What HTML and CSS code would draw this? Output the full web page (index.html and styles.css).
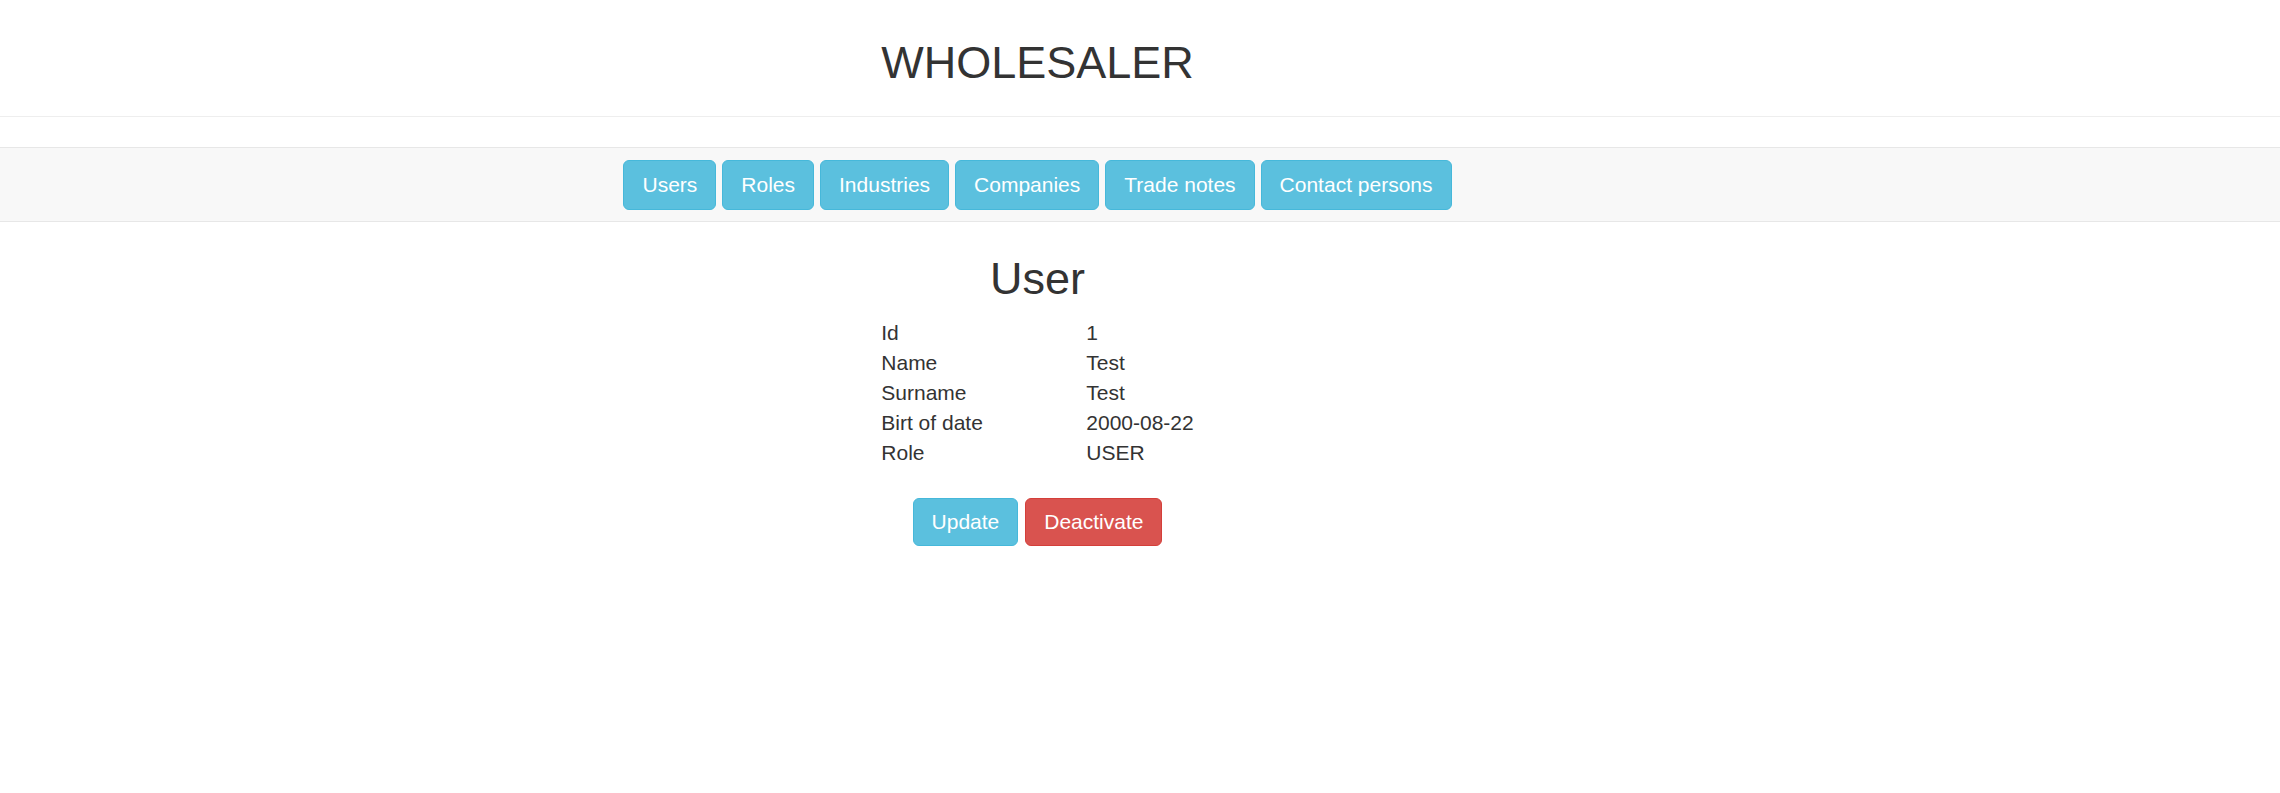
FILE: index.html
```html
<!DOCTYPE html>
<html lang="en">
<head>
<meta charset="utf-8">
<title>Wholesaler</title>
<link rel="stylesheet" href="styles.css">
</head>
<body>
  <header class="header">
    <div class="col">
      <h2 class="brand">WHOLESALER</h2>
    </div>
    <hr class="divider">
  </header>
  <nav class="navbar">
    <div class="col nav-buttons">
      <a class="btn btn-info">Users</a>
      <a class="btn btn-info">Roles</a>
      <a class="btn btn-info">Industries</a>
      <a class="btn btn-info">Companies</a>
      <a class="btn btn-info">Trade notes</a>
      <a class="btn btn-info">Contact persons</a>
    </div>
  </nav>
  <main class="col main">
    <h2 class="title">User</h2>
    <div class="details">
      <div class="label">Id</div><div class="value">1</div>
      <div class="label">Name</div><div class="value">Test</div>
      <div class="label">Surname</div><div class="value">Test</div>
      <div class="label">Birt of date</div><div class="value">2000-08-22</div>
      <div class="label">Role</div><div class="value">USER</div>
    </div>
    <div class="actions">
      <a class="btn btn-sm btn-info">Update</a>
      <a class="btn btn-sm btn-danger">Deactivate</a>
    </div>
  </main>
</body>
</html>
```

FILE: styles.css
```css
html, body {
  margin: 0;
  padding: 0;
  background: #fff;
}

body {
  font-family: "Liberation Sans", Arial, Helvetica, sans-serif;
  font-size: 21px;
  line-height: 30px;
  color: #333;
}

.col {
  box-sizing: border-box;
  width: 2075px;
  display: flex;
  flex-direction: column;
  align-items: center;
}

.header {
  padding-top: 37.5px;
}

.brand {
  margin: 0;
  font-size: 45px;
  line-height: 49.5px;
  font-weight: 400;
  color: #333;
}

.divider {
  margin: 29px 0 30px;
  border: 0;
  border-top: 1px solid #eee;
  height: 0;
}

.navbar {
  background: #f8f8f8;
  border-top: 1px solid #e7e7e7;
  border-bottom: 1px solid #e7e7e7;
  padding: 12px 0 11px;
}

.nav-buttons {
  flex-direction: row;
  justify-content: center;
  gap: 6px;
}

.btn {
  display: inline-block;
  box-sizing: border-box;
  padding: 9px 18px;
  font-size: 21px;
  line-height: 30px;
  border: 1px solid transparent;
  border-radius: 6px;
  color: #fff;
  white-space: nowrap;
  text-decoration: none;
}

.btn-sm {
  padding: 8.2px 18px;
}

.btn-info {
  background: #5bc0de;
  border-color: #46b8da;
}

.btn-danger {
  background: #d9534f;
  border-color: #d43f3a;
}

.main {
  padding-top: 32px;
}

.title {
  margin: 0 0 14px;
  font-size: 45px;
  line-height: 49.5px;
  font-weight: 400;
  color: #333;
}

.details {
  display: grid;
  grid-template-columns: 205px auto;
  text-align: left;
}

.actions {
  margin-top: 30.5px;
  display: flex;
  gap: 7px;
}
```
